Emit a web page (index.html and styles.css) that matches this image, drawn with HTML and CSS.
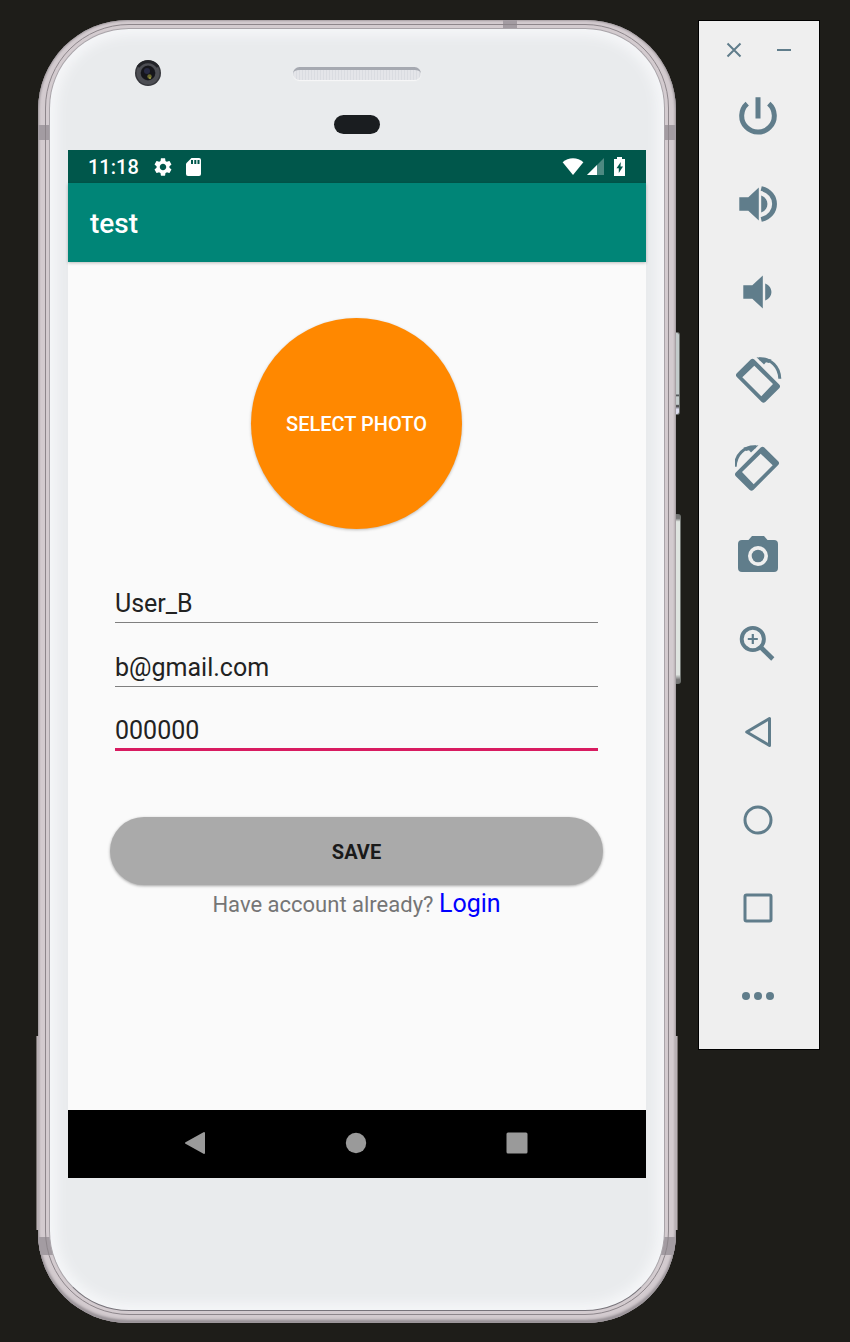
FILE: index.html
```html
<!DOCTYPE html>
<html lang="en">
<head>
<meta charset="utf-8">
<meta name="viewport" content="width=device-width, initial-scale=1">
<title>test</title>
<link rel="stylesheet" href="styles.css">
</head>
<body class="desktop">
<div class="phone">
  <span class="side-key side-key-power"></span>
  <span class="side-key side-key-volume"></span>
  <span class="grip grip-left"></span>
  <span class="grip grip-right"></span>
  <div class="bands">
    <span class="band band-top"></span>
    <span class="band band-tl"></span>
    <span class="band band-tr"></span>
    <span class="band band-bl"></span>
    <span class="band band-br"></span>
  </div>
  <div class="rim">
    <div class="face">
      <div class="bezel-top">
        <svg class="camera" viewBox="0 0 26 26" aria-hidden="true">
          <circle cx="13" cy="13" r="13" fill="#35363b"/>
          <circle cx="13" cy="13" r="9.5" fill="none" stroke="#4d4e54" stroke-width="4"/>
          <path d="M3 7a12 12 0 0 1 20 0" fill="none" stroke="#222328" stroke-width="3"/>
          <circle cx="13" cy="13" r="7.2" fill="#15151b"/>
          <circle cx="12" cy="11" r="3" fill="#272943"/>
          <circle cx="14.500" cy="16.500" r="2.200" fill="#6b6a2e"/>
          <circle cx="15" cy="18" r="1" fill="#9a9a3f"/>
        </svg>
        <span class="speaker"></span>
        <span class="sensor"></span>
      </div>
      <div class="screen">
        <div class="status">
          <span class="clock">11:18</span>
          <svg class="status-gear" viewBox="2 2 20 20" aria-hidden="true"><path fill="#fff" d="M19.140 12.940c.04-.3.060-.61.060-.94 0-.32-.02-.64-.07-.94l2.030-1.580c.18-.14.230-.41.120-.61l-1.920-3.320c-.12-.22-.37-.29-.59-.22l-2.390.96c-.5-.38-1.030-.7-1.620-.94l-.36-2.540c-.04-.24-.24-.41-.48-.41h-3.840c-.24 0-.43.170-.47.410l-.36 2.540c-.59.240-1.130.570-1.620.940l-2.390-.96c-.22-.08-.47 0-.59.220L2.740 8.870c-.12.210-.08.470.12.610l2.030 1.580c-.05.3-.09.630-.09.940s.02.640.070.940l-2.030 1.580c-.18.140-.23.410-.12.610l1.920 3.320c.12.220.370.290.590.220l2.390-.96c.5.380 1.030.7 1.620.940l.36 2.540c.05.240.240.410.480.410h3.840c.24 0 .44-.17.470-.41l.36-2.540c.59-.24 1.130-.56 1.620-.94l2.390.960c.22.080.470 0 .59-.22l1.920-3.320c.12-.22.070-.47-.12-.61l-2.010-1.580zM12 15.600c-1.980 0-3.600-1.620-3.600-3.600s1.620-3.600 3.600-3.600 3.600 1.620 3.600 3.600-1.620 3.600-3.600 3.600z"/></svg>
          <svg class="status-card" viewBox="0 0 15 18" aria-hidden="true"><path fill="#fff" d="M5.500 0H13a2 2 0 0 1 2 2v14a2 2 0 0 1-2 2H2a2 2 0 0 1-2-2V5.500z"/><path fill="#00574b" d="M5 2h2v4H5zM8.300 2h2v4h-2zM11.500 2h2v4h-2z"/></svg>
          <span class="status-space"></span>
          <svg class="status-wifi" viewBox="0 0 22 18" aria-hidden="true"><path fill="#fff" d="M11 18 0 4.500C6-1.300 16-1.300 22 4.500z"/></svg>
          <svg class="status-signal" viewBox="0 0 17 17" aria-hidden="true"><path fill="#fff" fill-opacity=".3" d="M17 0v17H0z"/><path fill="#fff" d="M10 7v10H0z"/></svg>
          <svg class="status-battery" viewBox="0 0 11 19" aria-hidden="true"><path fill="#fff" d="M3 0h5v2h3v17H0V2h3z"/><path fill="#00574b" d="M6.800 5 2.500 11.200h2.300V16L9 9.500H6.500z"/></svg>
        </div>
        <header class="appbar"><h1 class="title">test</h1></header>
        <main class="content">
          <button class="photo" type="button">SELECT PHOTO</button>
          <form class="form">
            <input class="field" type="text" aria-label="Username" value="User_B">
            <input class="field" type="email" aria-label="Email" value="b@gmail.com">
            <input class="field field-active" type="text" aria-label="Password" value="000000">
            <button class="save" type="button">SAVE</button>
          </form>
          <p class="account">Have account already? <a class="login" href="#login">Login</a></p>
        </main>
        <nav class="navbar">
          <button class="nav-key" type="button" aria-label="Back"><svg class="nav-icon" viewBox="0 0 24 24"><path fill="#9a9a9a" stroke="#9a9a9a" stroke-width="2" stroke-linejoin="round" d="M3 12 21 2v20z"/></svg></button>
          <button class="nav-key" type="button" aria-label="Home"><svg class="nav-icon" viewBox="0 0 24 24"><circle cx="12" cy="12" r="10.200" fill="#9a9a9a"/></svg></button>
          <button class="nav-key" type="button" aria-label="Overview"><svg class="nav-icon" viewBox="0 0 24 24"><rect x="1.500" y="1.500" width="21" height="21" rx="1.500" fill="#9a9a9a"/></svg></button>
        </nav>
      </div>
    </div>
  </div>
</div>
<aside class="tools">
  <div class="window-keys">
    <button class="window-key" type="button" aria-label="Close"><svg class="window-icon" viewBox="-8 -8 16 16"><path d="M-6.500-6.500 6.500 6.500M6.500-6.500-6.500 6.500"/></svg></button>
    <button class="window-key" type="button" aria-label="Minimize"><svg class="window-icon" viewBox="-8 -8 16 16"><path d="M-7 0H7"/></svg></button>
  </div>
  <button class="tool" type="button" aria-label="Power"><svg class="tool-icon" viewBox="-23 -24 48 48"><path class="line" stroke-width="5" d="M-10.800-12.400A16.300 16.300 0 1 0 10.800-12.400M0-18.700V2.500"/></svg></button>
  <button class="tool" type="button" aria-label="Volume up"><svg class="tool-icon" viewBox="-23 -24 48 48"><path class="solid" d="M-18.700-6.800h9L.8-16.500v33L-9.700 6.800h-9zM3.200-8.500C11.500-5.500 11.500 5.500 3.200 8.500z"/><path class="line" stroke-width="4.800" d="M3.200-15.500C21-11.500 21 11.500 3.200 15.500"/></svg></button>
  <button class="tool" type="button" aria-label="Volume down"><svg class="tool-icon" viewBox="-23 -24 48 48"><path class="solid" d="M-14.700-6.800h9L4.800-16.500v33L-5.700 6.800h-9zM7.200-8.500C15.500-5.500 15.500 5.500 7.200 8.500z"/></svg></button>
  <button class="tool" type="button" aria-label="Rotate left"><svg class="tool-icon" viewBox="-23 -24 48 48"><path class="solid" fill-rule="evenodd" d="M-21.200-6.800-7.300-20.400q1.800-1.600 3.600 0L21.200 4.400q1.800 2 0 3.800L7.300 22q-1.800 1.600-3.600 0L-21.200-3q-1.800-1.900 0-3.800zM-15.700-2.700 3.300 16.300 15 4.100-3.700-14.200z"/><path class="line" stroke-width="3" d="M1-21.200C13-22 21.500-13 21.800-1.200"/><path class="solid" d="M-1.500-22.800 6-15.500l2-2.300 3 .8 2.500-3.500z"/></svg></button>
  <button class="tool" type="button" aria-label="Rotate right"><svg class="tool-icon" viewBox="-23 -24 48 48"><g transform="translate(-1 0) scale(-1 1)"><path class="solid" fill-rule="evenodd" d="M-21.200-6.800-7.300-20.400q1.800-1.600 3.600 0L21.200 4.400q1.800 2 0 3.800L7.300 22q-1.800 1.600-3.600 0L-21.200-3q-1.800-1.900 0-3.800zM-15.700-2.700 3.300 16.300 15 4.100-3.700-14.200z"/><path class="line" stroke-width="3" d="M1-21.200C13-22 21.500-13 21.800-1.200"/><path class="solid" d="M-1.500-22.800 6-15.500l2-2.300 3 .8 2.500-3.500z"/></g></svg></button>
  <button class="tool" type="button" aria-label="Take screenshot"><svg class="tool-icon" viewBox="-23 -24 48 48"><path class="solid" fill-rule="evenodd" d="M-16-16h6.500l3.500-4H6l3.500 4H16q4 0 4 4v24q0 4-4 4h-32q-4 0-4-4v-24q0-4 4-4zM0-10a10 10 0 1 0 0 20 10 10 0 1 0 0-20z"/><circle class="solid" r="6.300"/></svg></button>
  <button class="tool" type="button" aria-label="Zoom"><svg class="tool-icon" viewBox="-23 -24 48 48"><circle class="line" cx="-5.200" cy="-5" r="11.100" stroke-width="3.900"/><path class="line" stroke-width="2.200" d="M-10.200-5h10M-5.200-10v10"/><path class="line" stroke-width="4.600" d="m3 3.500 11.800 11.500"/></svg></button>
  <button class="tool" type="button" aria-label="Back"><svg class="tool-icon" viewBox="-23 -24 48 48"><path class="line" stroke-width="3" stroke-linejoin="round" d="M-11.300 0 11.500-13.500v27z"/></svg></button>
  <button class="tool" type="button" aria-label="Home"><svg class="tool-icon" viewBox="-23 -24 48 48"><circle class="line" r="13" stroke-width="3"/></svg></button>
  <button class="tool" type="button" aria-label="Overview"><svg class="tool-icon" viewBox="-23 -24 48 48"><rect class="line" x="-13" y="-13" width="26" height="26" rx="1.500" stroke-width="3"/></svg></button>
  <button class="tool" type="button" aria-label="More"><svg class="tool-icon" viewBox="-23 -24 48 48"><circle class="solid" cx="-12" r="4"/><circle class="solid" r="4"/><circle class="solid" cx="12" r="4"/></svg></button>
</aside>
</body>
</html>
```

FILE: styles.css
```css
* {
  box-sizing: border-box;
}

.desktop {
  margin: 0;
  min-height: 100vh;
  padding: 20px 30px 19px 38px;
  display: flex;
  gap: 22px;
  background: #1e1d19;
  font-family: Roboto, "Liberation Sans", sans-serif;
}

button {
  margin: 0;
  padding: 0;
  border: 0;
  background: none;
  font-family: inherit;
  cursor: pointer;
}

svg {
  display: block;
}

/* Phone body */
.phone {
  position: relative;
  flex: 1;
  min-width: 0;
  display: flex;
  padding: 4px 7px 8px;
  border-radius: 90px;
  background: #d3cbcf;
  box-shadow: inset 0 0 2px 1px #a39ca1, inset 0 -3px 3px #8f898e;
}

.side-key {
  position: absolute;
  left: 100%;
  width: 5px;
  border: 1px solid #6f7370;
  border-left: 0;
  border-radius: 0 3px 3px 0;
  background: #d3d8d5;
}

.side-key-power {
  top: 312px;
  height: 83px;
  width: 4px;
  background: linear-gradient(#c3cbcb 75%, #4a4f50 77%, #c3cbcb 79%, #c3cbcb 88%, #333 90%, #dde 94%);
}

.side-key-volume {
  top: 494px;
  height: 170px;
  background: linear-gradient(#777 2%, #dfe4e0 4%, #dfe4e0 95%, #777 98%);
}

.grip {
  position: absolute;
  bottom: 93px;
  width: 3px;
  height: 194px;
  background: #b9b1b5;
}

.grip-left {
  left: -2px;
  border-left: 1px solid #77716f;
}

.grip-right {
  right: -2px;
  border-right: 1px solid #77716f;
}

.bands {
  position: absolute;
  inset: 0;
  overflow: hidden;
  border-radius: inherit;
}

.band {
  position: absolute;
  width: 14px;
  height: 15px;
  background: #a39ca2;
}

.band-top {
  top: 0;
  right: 159px;
  height: 9px;
}

.band-tl {
  top: 105px;
  left: 0;
}

.band-tr {
  top: 105px;
  right: 0;
}

.band-bl {
  bottom: 68px;
  left: 0;
  width: 20px;
  height: 18px;
}

.band-br {
  bottom: 68px;
  right: 0;
  width: 20px;
  height: 18px;
}

.rim {
  position: relative;
  flex: 1;
  min-width: 0;
  display: flex;
  padding: 3px;
  border: 1px solid #8d868b;
  border-radius: 84px;
}

.face {
  flex: 1;
  min-width: 0;
  display: flex;
  flex-direction: column;
  padding: 0 18px 132px;
  border: 1px solid #a9a4a9;
  border-bottom-color: #77737a;
  border-radius: 80px;
  background: #e9ebed;
  box-shadow: inset 0 0 12px 7px #f5f6f8;
}

.bezel-top {
  height: 121px;
  display: grid;
  grid-template-columns: 1fr 128px 1fr;
  grid-template-rows: 26px 19px;
  row-gap: 29px;
  align-items: center;
  padding-top: 31px;
}

.camera {
  width: 26px;
  height: 26px;
  margin-left: 67px;
}

.speaker {
  height: 13px;
  border-radius: 7px;
  border-top: 3px solid #a6a9b1;
  background: repeating-linear-gradient(90deg, #dadce1 0 1px, #e4e5e9 1px 3px);
  box-shadow: 0 1px 1px #f8f8f8;
}

.sensor {
  grid-column: 2;
  grid-row: 2;
  justify-self: center;
  width: 46px;
  height: 19px;
  border-radius: 10px;
  background: #1a1d20;
}

/* Screen */
.screen {
  flex: 1;
  display: flex;
  flex-direction: column;
  background: #fafafa;
}

.status {
  height: 33px;
  display: flex;
  align-items: center;
  padding: 0 20px;
  background: #00574b;
  color: #fff;
}

.clock {
  padding-top: 2px;
  font-size: 20px;
  font-weight: 500;
  line-height: 31px;
}

.status-gear {
  width: 18px;
  height: 18px;
  margin-left: 15px;
}

.status-card {
  width: 15px;
  height: 18px;
  margin-left: 14px;
}

.status-space {
  flex: 1;
}

.status-wifi {
  width: 22px;
  height: 17px;
}

.status-signal {
  width: 17px;
  height: 17px;
  margin-left: 3px;
}

.status-battery {
  width: 11px;
  height: 19px;
  margin: 0 1px 0 10px;
}

.appbar {
  height: 79px;
  display: flex;
  align-items: center;
  padding: 2px 22px 0;
  background: #008577;
  box-shadow: 0 1px 3px rgba(0, 0, 0, 0.25);
}

.title {
  margin: 0;
  color: #fff;
  font-size: 28px;
  font-weight: 500;
  line-height: 36px;
}

.content {
  flex: 1;
  display: flex;
  flex-direction: column;
  align-items: center;
  padding: 56px 43px 56px 42px;
}

.photo {
  width: 211px;
  height: 211px;
  border-radius: 50%;
  background: #ff8800;
  box-shadow: 0 1px 3px rgba(0, 0, 0, 0.25);
  color: #fff;
  font-size: 20px;
  font-weight: 500;
}

.form {
  align-self: stretch;
  display: flex;
  flex-direction: column;
  margin-top: 30px;
}

.field {
  height: 64px;
  margin: 0 5px;
  padding: 26px 0 0;
  border: 0;
  border-bottom: 1px solid #7f7f7f;
  border-radius: 0;
  outline: 0;
  background: none;
  color: #222;
  font-family: inherit;
  font-size: 25px;
}

.field-active {
  border-bottom: 3px solid #d81b60;
}

.save {
  height: 68px;
  margin-top: 66px;
  padding-top: 2px;
  border-radius: 34px;
  background: #aaa;
  box-shadow: 0 1px 3px rgba(0, 0, 0, 0.35);
  color: #1a1a1a;
  font-size: 20px;
  font-weight: 700;
}

.account {
  margin: 0;
  color: #757575;
  font-size: 22px;
  line-height: 38px;
}

.login {
  color: #00f;
  font-size: 25px;
  text-decoration: none;
}

.navbar {
  height: 68px;
  display: grid;
  grid-template-columns: repeat(3, 1fr);
  padding: 0 49px 2px 47px;
  background: #000;
}

.nav-key {
  display: grid;
  place-items: center;
}

.nav-icon {
  width: 24px;
  height: 24px;
}

/* Emulator toolbar */
.tools {
  align-self: flex-start;
  width: 122px;
  display: flex;
  flex-direction: column;
  padding: 7px 0 9px;
  border: 1px solid #000;
  background: #efefef;
}

.window-keys {
  display: grid;
  grid-template-columns: 50px 50px;
  justify-content: center;
  height: 44px;
}

.window-key,
.tool {
  display: grid;
  place-items: center;
}

.window-icon {
  width: 16px;
  height: 16px;
  fill: none;
  stroke: #607d8b;
  stroke-width: 2;
}

.tool {
  height: 88px;
}

.tool-icon {
  width: 48px;
  height: 48px;
}

.solid {
  fill: #607d8b;
}

.line {
  fill: none;
  stroke: #607d8b;
}
```
